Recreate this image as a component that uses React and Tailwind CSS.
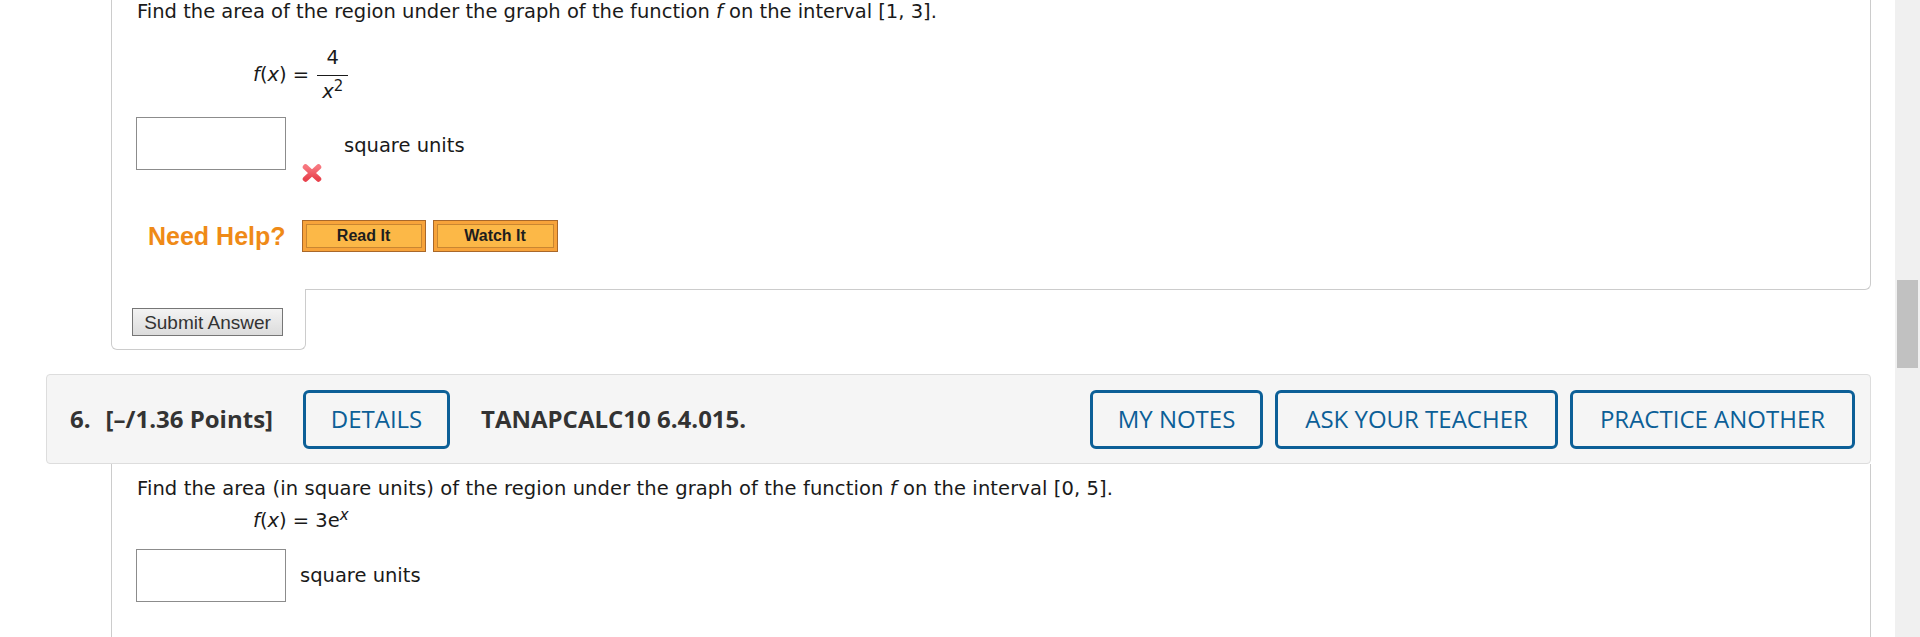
export default function App() {
  const q = "font-['DejaVu_Sans',Verdana,sans-serif] text-[19.5px] leading-[24px] text-[#1a1a1a]";
  const hb =
    "flex h-[59px] items-center justify-center rounded-[6px] border-[3px] border-[#0c5f97] text-[24px] font-medium text-[#0c5f97] font-['Open_Sans',sans-serif]";
  return (
    <div className="flex h-[637px] w-[1920px] overflow-hidden bg-white">
      <div className="flex-1 pl-[46px] pr-[24px]">
        {/* Question 5 panel */}
        <div className={`ml-[65px] rounded-br-[6px] border-x border-b border-[#cccccc] ${q}`}>
          <div className="pb-[37px] pl-[25px]">
            <p>
              Find the area of the region under the graph of the function <i>f</i> on the interval [1, 3].
            </p>
            <div className="ml-[116px] mt-[22px] flex items-center">
              <span>
                <i>f</i>(<i>x</i>) =
              </span>
              <div className="ml-[8px] flex w-[31px] flex-col items-center">
                <div className="h-[24px] leading-[24px]">4</div>
                <div className="mt-[5px] h-px w-full bg-[#1a1a1a]" />
                <div className="mt-[4px] h-[24px] leading-[24px]">
                  <i>x</i>
                  <sup className="text-[15px]">2</sup>
                </div>
              </div>
            </div>
            <div className="-ml-px mt-[13px] flex items-start">
              <div className="h-[53px] w-[150px] border border-[#8c8c8c] bg-white" />
              <svg className="ml-[15px] mt-[46px]" width="22" height="20" viewBox="0 0 22 20">
                <defs>
                  <linearGradient id="xg" x1="0" y1="0" x2="0" y2="1">
                    <stop offset="0" stopColor="#f7777f" />
                    <stop offset="1" stopColor="#e8424d" />
                  </linearGradient>
                </defs>
                <path d="M4.5 4 L17.5 16 M17.5 4 L4.5 16" stroke="url(#xg)" strokeWidth="5.5" strokeLinecap="round" />
              </svg>
              <span className="ml-[21px] mt-[17px]">square units</span>
            </div>
            <div className="mt-[37px] flex items-center">
              <span className="ml-[11px] font-['Liberation_Sans',Arial,sans-serif] text-[25px] font-bold leading-[30px] text-[#ef8a17]">
                Need Help?
              </span>
              <div className="ml-[16px] h-[32px] w-[124px] border border-[#a9682a] bg-[#f7a33a] p-[3px]">
                <div className="flex h-full items-center justify-center border border-[#c98631] bg-[#fcb847] font-['Liberation_Sans',Arial,sans-serif] text-[16px] font-bold leading-none text-[#1e1e1e]">
                  Read It
                </div>
              </div>
              <div className="ml-[7px] h-[32px] w-[125px] border border-[#a9682a] bg-[#f7a33a] p-[3px]">
                <div className="flex h-full items-center justify-center border border-[#c98631] bg-[#fcb847] font-['Liberation_Sans',Arial,sans-serif] text-[16px] font-bold leading-none text-[#1e1e1e]">
                  Watch It
                </div>
              </div>
            </div>
          </div>
        </div>
        {/* Submit tab */}
        <div className="relative -mt-px ml-[65px] w-[195px] rounded-b-[6px] border-x border-b border-[#cccccc] bg-white pb-[13px] pl-[20px] pt-[19px]">
          <div className="flex h-[28px] w-[151px] items-center justify-center border border-[#767676] bg-gradient-to-b from-[#f3f3f3] to-[#dcdcdc] font-['Liberation_Sans',Arial,sans-serif] text-[19px] leading-none text-[#333]">
            Submit Answer
          </div>
        </div>
        {/* Question 6 header */}
        <div className="mt-[24px] flex h-[90px] items-center rounded-[4px] border border-[#dddddd] bg-[#f5f5f5] pl-[23px] pr-[15px] font-['Open_Sans',sans-serif] text-[#333]">
          <span className="text-[24px] font-bold">6.</span>
          <span className="ml-[15px] text-[24px] font-bold">[–/1.36 Points]</span>
          <div className={`ml-[30px] w-[147px] ${hb}`}>DETAILS</div>
          <span className="ml-[31px] text-[24px] font-bold">TANAPCALC10 6.4.015.</span>
          <div className="ml-auto flex gap-[12px]">
            <div className={`w-[173px] ${hb}`}>MY NOTES</div>
            <div className={`w-[283px] ${hb}`}>ASK YOUR TEACHER</div>
            <div className={`w-[285px] ${hb}`}>PRACTICE ANOTHER</div>
          </div>
        </div>
        {/* Question 6 body */}
        <div className={`ml-[65px] h-[200px] border-x border-[#cccccc] pl-[25px] pt-[13px] ${q}`}>
          <p className="tracking-[0.1px]">
            Find the area (in square units) of the region under the graph of the function <i>f</i> on the interval [0, 5].
          </p>
          <p className="ml-[116px] mt-[8px]">
            <i>f</i>(<i>x</i>) = 3e
            <sup className="text-[15px]">
              <i>x</i>
            </sup>
          </p>
          <div className="-ml-px mt-[16px] flex items-center">
            <div className="h-[53px] w-[150px] border border-[#8c8c8c] bg-white" />
            <span className="ml-[14px]">square units</span>
          </div>
        </div>
      </div>
      {/* Scrollbar */}
      <div className="h-full w-[25px] bg-[#f0f0f0] px-[2px] pt-[280px]">
        <div className="h-[88px] w-full bg-[#c1c1c1]" />
      </div>
    </div>
  );
}
